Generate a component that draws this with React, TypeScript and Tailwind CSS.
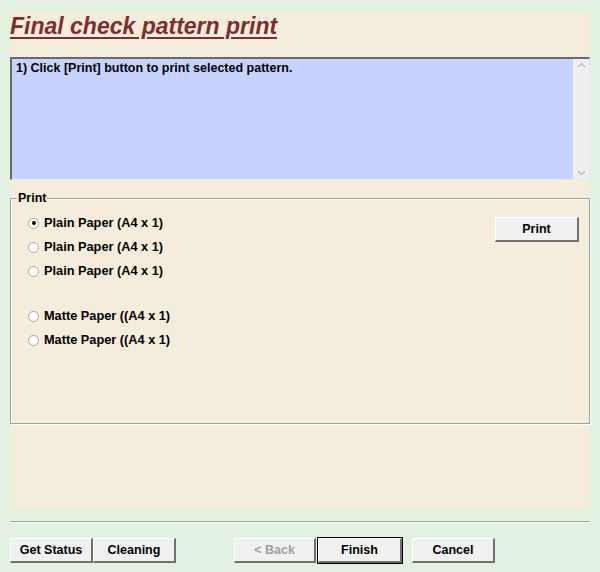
import React from "react";

const Radio = ({ checked, label }: { checked?: boolean; label: string }) => (
  <div className="flex items-center h-[24px]">
    <span className="w-[11px] h-[11px] rounded-full border border-[#a8a8a8] bg-white flex items-center justify-center mr-[5px]">
      {checked && <span className="w-[4px] h-[4px] rounded-full bg-black" />}
    </span>
    <span>{label}</span>
  </div>
);

const Btn = ({ children, className = "", disabled = false, def = false }: { children: React.ReactNode; className?: string; disabled?: boolean; def?: boolean }) => (
  <div
    className={
      "h-[25px] flex items-center justify-center bg-[#f0f0f0] border-t border-l border-t-white border-l-white border-r-[2px] border-b-[2px] border-r-[#707070] border-b-[#707070] " +
      (def ? "outline outline-1 outline-black " : "") +
      (disabled ? "text-[#a0a0a0] " : "text-black ") +
      className
    }
  >
    {children}
  </div>
);

export default function App() {
  return (
    <div
      className="w-[600px] h-[572px] bg-[#e2f1e2] relative text-[12.5px] font-bold text-black"
      style={{ fontFamily: '"Liberation Sans", Arial, sans-serif' }}
    >
      <div className="absolute left-[10px] top-[12px] w-[580px] h-[497px] bg-[#f4eddb]" />
      <div className="relative flex flex-col pl-[10px] pr-[10px]">
        <div className="h-[57px] pt-[1px]">
          <span className="italic underline text-[23px] text-[#7d2e2e] leading-[26px] decoration-[2px] underline-offset-[3px] relative top-[12px]">
            Final check pattern print
          </span>
        </div>
        <div className="h-[123px] bg-[#c6d3fe] border-t-[2px] border-l-[2px] border-t-[#6a6a6a] border-l-[#6a6a6a] border-r border-b border-r-[#e8e8e8] border-b-[#e8e8e8] flex">
          <div className="flex-1 pl-[4px] pt-[2px] leading-[15px]">1) Click [Print] button to print selected pattern.</div>
          <div className="w-[16px] bg-[#efefef] flex flex-col justify-between items-center py-[3px] text-[#b0b0b0]">
            <svg width="9" height="6" viewBox="0 0 9 6"><path d="M1 5 L4.5 1.5 L8 5" fill="none" stroke="#b8b8b8" strokeWidth="1.2" /></svg>
            <svg width="9" height="6" viewBox="0 0 9 6"><path d="M1 1 L4.5 4.5 L8 1" fill="none" stroke="#b8b8b8" strokeWidth="1.2" /></svg>
          </div>
        </div>
        <div className="relative mt-[18px] h-[226px] border border-[#a0a0a0] shadow-[inset_1px_1px_0_#fff,1px_1px_0_#fff]">
          <span className="absolute -top-[9px] left-[6px] bg-[#f4eddb] px-[1px] leading-[16px] text-[12.5px]">Print</span>
          <div className="absolute left-[484px] top-[18px] w-[84px]">
            <Btn>Print</Btn>
          </div>
          <div className="pl-[17px] pt-[12px] text-[12.75px]">
            <Radio checked label="Plain Paper (A4 x 1)" />
            <Radio label="Plain Paper (A4 x 1)" />
            <Radio label="Plain Paper (A4 x 1)" />
            <div className="h-[21px]" />
            <Radio label="Matte Paper ((A4 x 1)" />
            <Radio label="Matte Paper ((A4 x 1)" />
          </div>
        </div>
        <div className="h-[97px]" />
        <div className="h-[2px] border-t border-t-[#a0a0a0] border-b border-b-white" />
        <div className="flex mt-[15px] h-[26px]">
          <Btn className="w-[83px]">Get Status</Btn>
          <Btn className="w-[83px]">Cleaning</Btn>
          <div className="w-[58px]" />
          <Btn className="w-[82px]" disabled>&lt; Back</Btn>
          <div className="w-[2px]" />
          <Btn className="w-[84px]" def>Finish</Btn>
          <div className="w-[10px]" />
          <Btn className="w-[83px]">Cancel</Btn>
        </div>
      </div>
    </div>
  );
}
